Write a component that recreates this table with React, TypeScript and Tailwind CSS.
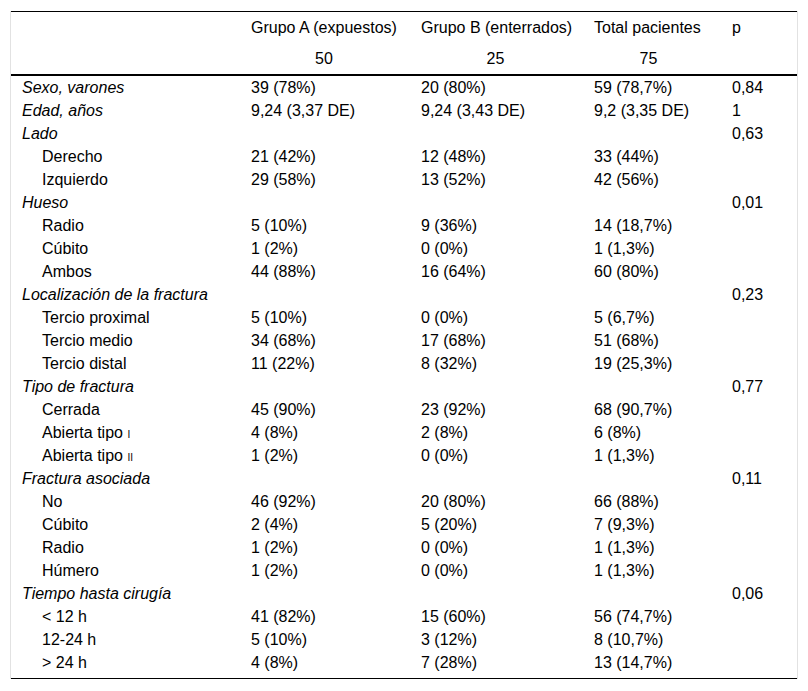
import React from "react";

type Row = { label: React.ReactNode; a?: string; b?: string; t?: string; p?: string; sub?: boolean };

const small = (s: string) => <span className="text-[10px] leading-[0]">{s}</span>;

const rows: Row[] = [
  { label: "Sexo, varones", a: "39 (78%)", b: "20 (80%)", t: "59 (78,7%)", p: "0,84" },
  { label: "Edad, años", a: "9,24 (3,37 DE)", b: "9,24 (3,43 DE)", t: "9,2 (3,35 DE)", p: "1" },
  { label: "Lado", p: "0,63" },
  { label: "Derecho", a: "21 (42%)", b: "12 (48%)", t: "33 (44%)", sub: true },
  { label: "Izquierdo", a: "29 (58%)", b: "13 (52%)", t: "42 (56%)", sub: true },
  { label: "Hueso", p: "0,01" },
  { label: "Radio", a: "5 (10%)", b: "9 (36%)", t: "14 (18,7%)", sub: true },
  { label: "Cúbito", a: "1 (2%)", b: "0 (0%)", t: "1 (1,3%)", sub: true },
  { label: "Ambos", a: "44 (88%)", b: "16 (64%)", t: "60 (80%)", sub: true },
  { label: "Localización de la fractura", p: "0,23" },
  { label: "Tercio proximal", a: "5 (10%)", b: "0 (0%)", t: "5 (6,7%)", sub: true },
  { label: "Tercio medio", a: "34 (68%)", b: "17 (68%)", t: "51 (68%)", sub: true },
  { label: "Tercio distal", a: "11 (22%)", b: "8 (32%)", t: "19 (25,3%)", sub: true },
  { label: "Tipo de fractura", p: "0,77" },
  { label: "Cerrada", a: "45 (90%)", b: "23 (92%)", t: "68 (90,7%)", sub: true },
  { label: <>Abierta tipo {small("I")}</>, a: "4 (8%)", b: "2 (8%)", t: "6 (8%)", sub: true },
  { label: <>Abierta tipo {small("II")}</>, a: "1 (2%)", b: "0 (0%)", t: "1 (1,3%)", sub: true },
  { label: "Fractura asociada", p: "0,11" },
  { label: "No", a: "46 (92%)", b: "20 (80%)", t: "66 (88%)", sub: true },
  { label: "Cúbito", a: "2 (4%)", b: "5 (20%)", t: "7 (9,3%)", sub: true },
  { label: "Radio", a: "1 (2%)", b: "0 (0%)", t: "1 (1,3%)", sub: true },
  { label: "Húmero", a: "1 (2%)", b: "0 (0%)", t: "1 (1,3%)", sub: true },
  { label: "Tiempo hasta cirugía", p: "0,06" },
  { label: "< 12 h", a: "41 (82%)", b: "15 (60%)", t: "56 (74,7%)", sub: true },
  { label: "12-24 h", a: "5 (10%)", b: "3 (12%)", t: "8 (10,7%)", sub: true },
  { label: "> 24 h", a: "4 (8%)", b: "7 (28%)", t: "13 (14,7%)", sub: true },
];

export default function App() {
  return (
    <div className="min-h-screen bg-white pt-[11px] px-[10px] text-black font-['Liberation_Sans',Arial,sans-serif] text-[16px]">
      <div className="border-x border-[#e2e2e2]">
        <div className="border-t border-b border-black pb-[4px]">
          <table className="w-full table-fixed">
            <colgroup>
              <col className="w-[228px]" />
              <col className="w-[170px]" />
              <col className="w-[173px]" />
              <col className="w-[138px]" />
              <col />
            </colgroup>
            <thead>
              <tr className="h-[31px]">
                <th />
                <th className="pl-3 text-left font-normal whitespace-nowrap">Grupo A (expuestos)</th>
                <th className="pl-3 text-left font-normal whitespace-nowrap">Grupo B (enterrados)</th>
                <th className="pl-3 text-left font-normal whitespace-nowrap">Total pacientes</th>
                <th className="pl-3 text-left font-normal">p</th>
              </tr>
              <tr className="h-[32px] border-b-2 border-black">
                <th />
                <th className="pl-3 font-normal">
                  <div className="w-[146px] text-center">50</div>
                </th>
                <th className="pl-3 font-normal">
                  <div className="w-[149px] text-center">25</div>
                </th>
                <th className="pl-3 font-normal">
                  <div className="w-[109px] text-center">75</div>
                </th>
                <th />
              </tr>
            </thead>
            <tbody>
              {rows.map((r, i) => (
                <tr key={i} className="h-[23px] leading-[23px]">
                  <td className={r.sub ? "pl-[31px]" : "pl-[11px] italic"}>{r.label}</td>
                  <td className="pl-3">{r.a}</td>
                  <td className="pl-3">{r.b}</td>
                  <td className="pl-3">{r.t}</td>
                  <td className="pl-3">{r.p}</td>
                </tr>
              ))}
            </tbody>
          </table>
        </div>
      </div>
    </div>
  );
}
